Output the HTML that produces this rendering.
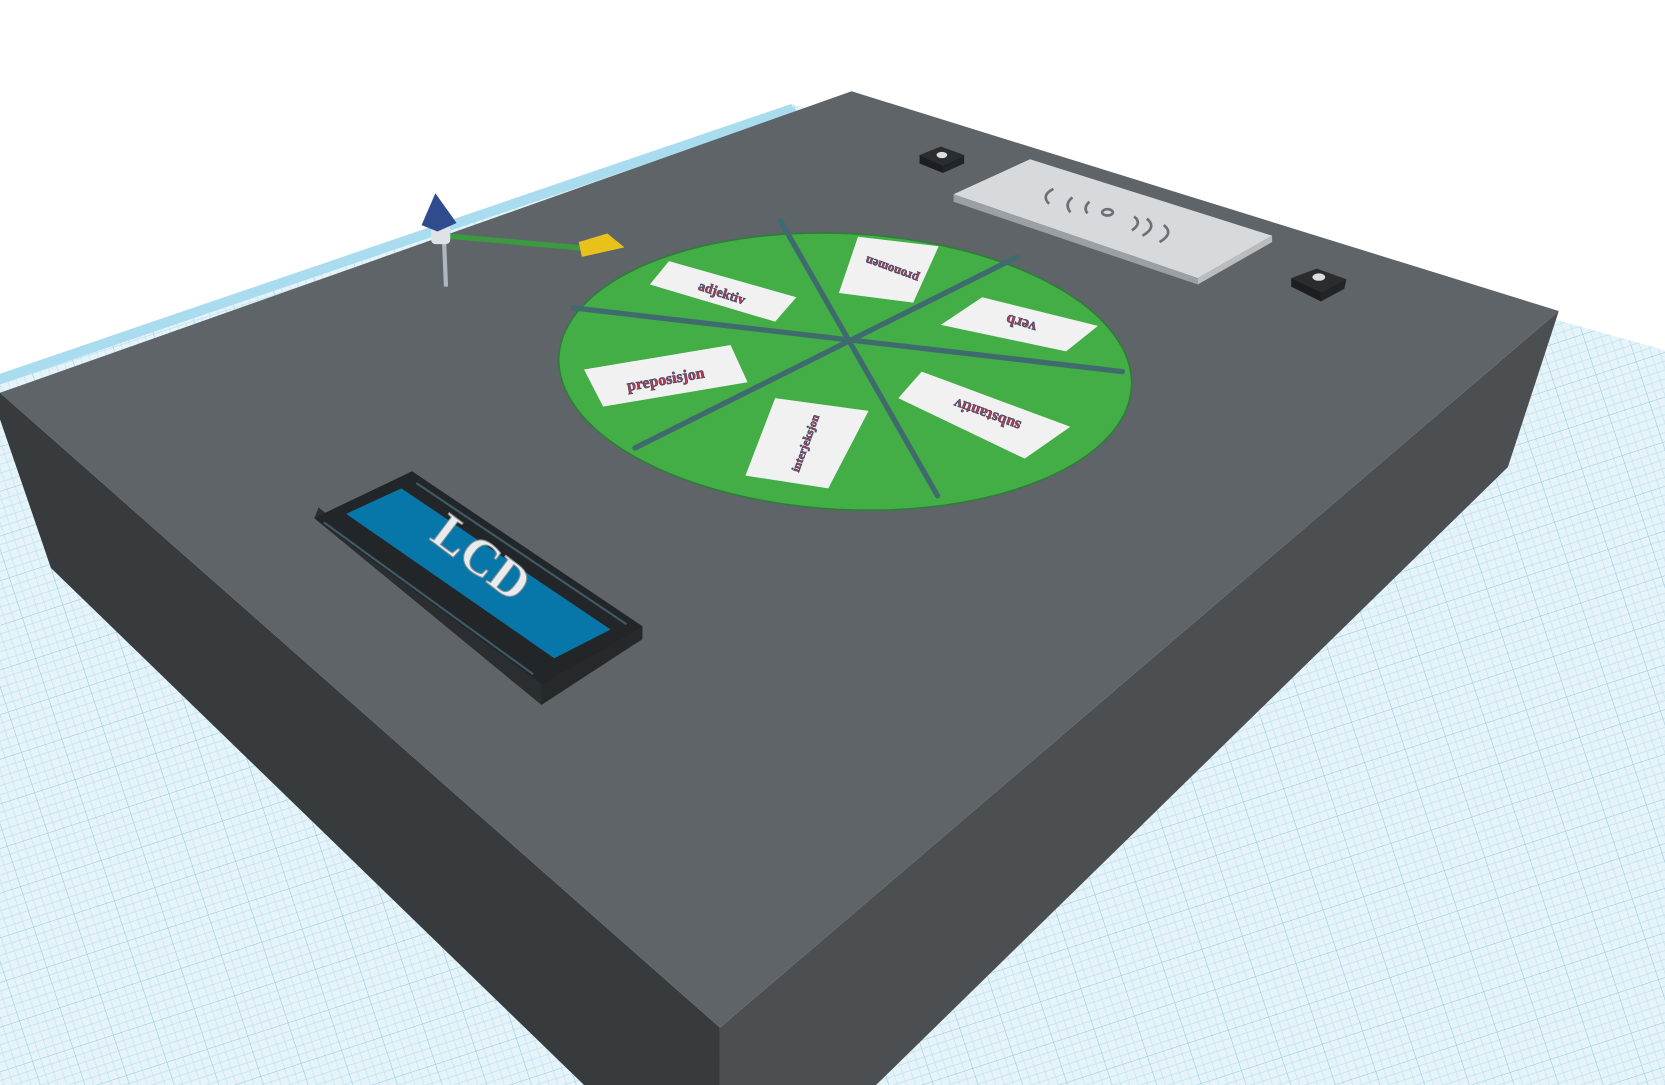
<!DOCTYPE html>
<html><head><meta charset="utf-8"><style>
html,body{margin:0;padding:0;background:#fff;overflow:hidden}
svg{display:block}
</style></head><body>
<svg width="1665" height="1085" viewBox="0 0 1568 1022" preserveAspectRatio="none" xmlns="http://www.w3.org/2000/svg">
<defs>
<pattern id="g" width="40" height="40" patternUnits="userSpaceOnUse" patternTransform="rotate(-18)">
<rect width="40" height="40" fill="#e6f4fa"/>
<path d="M0 8H40M0 16H40M0 24H40M0 32H40M8 0V40M16 0V40M24 0V40M32 0V40" stroke="#bfe2ef" stroke-width="0.6"/>
<path d="M0 0H40M0 0V40" stroke="#8ccbe3" stroke-width="1"/>
</pattern>
<linearGradient id="fade" x1="0" y1="0" x2="0" y2="1">
<stop offset="0" stop-color="#fff" stop-opacity="1"/><stop offset="0.45" stop-color="#fff" stop-opacity="0.3"/><stop offset="1" stop-color="#fff" stop-opacity="0"/>
</linearGradient>
</defs>
<rect width="1568" height="1022" fill="#fff"/>
<polygon points="0,352 745,98 1568,330 1568,1022 0,1022" fill="url(#g)"/>
<polygon points="0,352 745,98 750,106 0,362" fill="#a9dcef"/>
<!-- box -->
<polygon points="0,370 678,968 678,1022 550,1022 48,535 0,395" fill="#383b3d"/>
<polygon points="678,968 1468,293 1420,440 825,1022 678,1022" fill="#4b4f52"/>
<polygon points="0,370 802,86 1468,293 678,968" fill="#5f6468"/>
<!-- wheel -->
<ellipse cx="796" cy="350" rx="270" ry="130" transform="rotate(3 796 350)" fill="#43ad46" stroke="#2f7d3a" stroke-width="1.5"/>
<g stroke="#3f6a6e" stroke-width="5" stroke-linecap="round">
<line x1="735" y1="208" x2="883" y2="467"/>
<line x1="540" y1="290" x2="1057" y2="350"/>
<line x1="958" y1="242" x2="598" y2="422"/>
</g>
<g font-family="Liberation Serif,serif" font-weight="bold" fill="#c23a4a" stroke="#3b4a6a" stroke-width="0.6">
<polygon points="630,246 750,280 730,303 612,268" fill="#f1f1f1" stroke="none"/>
<text x="680" y="280" font-size="13" text-anchor="middle" transform="rotate(18 680 275)">adjektiv</text>
<polygon points="808,223 884,232 860,285 790,276" fill="#f1f1f1" stroke="none"/>
<text x="840" y="258" font-size="12" text-anchor="middle" transform="rotate(200 840 254)">pronomen</text>
<polygon points="925,280 1034,307 1004,331 886,306" fill="#f1f1f1" stroke="none"/>
<text x="962" y="308" font-size="15" text-anchor="middle" transform="rotate(197 962 304)">verb</text>
<polygon points="550,348 688,325 704,360 568,383" fill="#f1f1f1" stroke="none"/>
<text x="627" y="362" font-size="15" text-anchor="middle" transform="rotate(-10 627 358)">preposisjon</text>
<polygon points="730,375 818,387 780,460 702,448" fill="#f1f1f1" stroke="none"/>
<text x="760" y="420" font-size="11" text-anchor="middle" transform="rotate(-70 760 418)">interjeksjon</text>
<polygon points="868,350 1008,402 965,432 846,375" fill="#f1f1f1" stroke="none"/>
<text x="930" y="394" font-size="15" text-anchor="middle" transform="rotate(200 930 390)">substantiv</text>
</g>
<!-- pointer -->
<line x1="418" y1="222" x2="552" y2="234" stroke="#3b9a3f" stroke-width="5"/>
<polygon points="545,228 572,220 588,233 548,242" fill="#e8c21b"/>
<line x1="418" y1="222" x2="420" y2="270" stroke="#aeb7bd" stroke-width="4"/>
<rect x="406" y="212" width="18" height="18" rx="4" fill="#dfe3e6"/>
<polygon points="410,182 397,212 412,218 430,210" fill="#2e4c8e"/>
<!-- buttons -->
<polygon points="866,146 886,138 908,146 888,156" fill="#2a2d30"/><polygon points="866,146 888,156 888,163 866,154" fill="#1c1e20"/><polygon points="888,156 908,146 908,154 888,163" fill="#222528"/><ellipse cx="887" cy="146" rx="5" ry="3" fill="#ddd"/>
<polygon points="1216,262 1240,253 1268,263 1244,275" fill="#2a2d30"/><polygon points="1216,262 1244,275 1244,284 1216,270" fill="#1c1e20"/><polygon points="1244,275 1268,263 1266,272 1244,284" fill="#222528"/><ellipse cx="1242" cy="261" rx="6" ry="3.5" fill="#ddd"/>
<!-- rfid plate -->
<polygon points="898,183 970,150 1198,222 1128,262" fill="#d6dadd"/>
<polygon points="898,183 1128,262 1128,268 898,190" fill="#9ba0a4"/>
<polygon points="1128,262 1198,222 1198,228 1128,268" fill="#b9bdc0"/>
<g fill="none" stroke="#6a7076" stroke-width="2.5">
<path d="M992 178 q-12 6 -4 14"/><path d="M1010 186 q-8 6 -2 14"/><path d="M1026 190 q-6 5 -2 11"/>
<path d="M1068 204 q8 6 -2 13"/><path d="M1080 206 q10 8 -4 16"/><path d="M1096 212 q10 8 -4 16"/>
<ellipse cx="1043" cy="200" rx="5" ry="3"/>
</g>
<!-- LCD -->
<polygon points="296,488 388,444 605,590 510,664" fill="#1b1d1f"/>
<polygon points="296,488 510,664 510,644 300,478" fill="#2b2e31"/>
<polygon points="510,644 605,590 605,602 510,664" fill="#26292b"/>
<polygon points="296,488 388,444 605,590 510,644" fill="#232629"/>
<polygon points="326,484 378,460 575,593 522,620" fill="#0677a8"/>
<g fill="none" stroke="#3e5a66" stroke-width="2"><line x1="305" y1="492" x2="502" y2="635"/><line x1="392" y1="455" x2="590" y2="588"/></g>
<text x="450" y="540" font-family="Liberation Serif,serif" font-weight="bold" font-size="48" fill="#e8ecee" stroke="#8a9196" stroke-width="1" text-anchor="middle" transform="rotate(37 450 530)">LCD</text>
</svg>
</body></html>
